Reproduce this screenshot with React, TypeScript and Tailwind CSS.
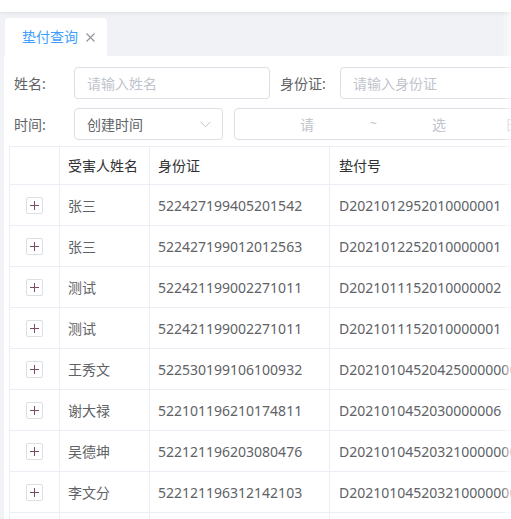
import React from "react";

const rows = [
  ["张三", "522427199405201542", "D2021012952010000001"],
  ["张三", "522427199012012563", "D2021012252010000001"],
  ["测试", "522421199002271011", "D2021011152010000002"],
  ["测试", "522421199002271011", "D2021011152010000001"],
  ["王秀文", "522530199106100932", "D2021010452042500000001"],
  ["谢大禄", "522101196210174811", "D2021010452030000006"],
  ["吴德坤", "522121196203080476", "D2021010452032100000001"],
  ["李文分", "522121196312142103", "D2021010452032100000002"],
  ["", "", ""],
];

export default function App() {
  return (
    <div
      className="relative w-[511px] h-[519px] overflow-hidden bg-[#f0f2f5]"
      style={{ fontFamily: '"Noto Sans", "Noto Sans CJK SC", sans-serif' }}
    >
      <div className="relative z-10 h-[12px] bg-white shadow-[0_1px_4px_rgba(0,21,41,0.08)]" />
      <div className="h-[44px] pt-[6px] pl-[5px]">
        <div className="flex h-[38px] w-[102px] items-center rounded-t-[4px] bg-white pl-[17px] text-[14px] leading-none">
          <span className="text-[#409eff]">垫付查询</span>
          <svg className="ml-[8px]" width="9" height="9" viewBox="0 0 9 9" fill="none">
            <path d="M0.5 0.5 L8.5 8.5 M8.5 0.5 L0.5 8.5" stroke="#909399" strokeWidth="1.1" />
          </svg>
        </div>
      </div>
      <div className="ml-[4px] bg-white pt-[11px] text-[14px] text-[#606266]">
        <div className="flex h-[32px] items-center whitespace-nowrap">
          <div className="w-[70px] shrink-0 pl-[10px]">姓名:</div>
          <div className="flex h-[32px] w-[196px] shrink-0 items-center rounded-[4px] border border-[#dcdfe6] pl-[12px] text-[#c0c4cc]">
            请输入姓名
          </div>
          <div className="w-[70px] shrink-0 pl-[10px]">身份证:</div>
          <div className="flex h-[32px] w-[200px] shrink-0 items-center rounded-[4px] border border-[#dcdfe6] pl-[12px] text-[#c0c4cc]">
            请输入身份证
          </div>
        </div>
        <div className="mt-[9px] flex h-[32px] items-center whitespace-nowrap">
          <div className="w-[70px] shrink-0 pl-[10px]">时间:</div>
          <div className="flex h-[32px] w-[149px] shrink-0 items-center justify-between rounded-[4px] border border-[#dcdfe6] pl-[12px] pr-[11px] text-[#606266]">
            <span>创建时间</span>
            <svg width="11" height="7" viewBox="0 0 11 7" fill="none">
              <path d="M0.5 0.8 L5.5 5.8 L10.5 0.8" stroke="#c0c4cc" strokeWidth="1" />
            </svg>
          </div>
          <div className="ml-[11px] flex h-[32px] w-[300px] shrink-0 items-center rounded-[4px] border border-[#dcdfe6] text-[#c0c4cc]">
            <span className="ml-[65px]">请</span>
            <span className="ml-[56px] text-[12px]">~</span>
            <span className="ml-[55px]">选</span>
            <span className="ml-[59px]">日</span>
          </div>
        </div>
        <div className="ml-[5px] mt-[6px] w-[520px] border-l border-t border-[#ebeef5]">
          <div className="flex h-[38px] items-center border-b border-[#ebeef5] text-[#303133]">
            <div className="h-full w-[50px] shrink-0 border-r border-[#ebeef5]" />
            <div className="flex h-full w-[90px] shrink-0 items-center border-r border-[#ebeef5] pl-[8px]">受害人姓名</div>
            <div className="flex h-full w-[180px] shrink-0 items-center border-r border-[#ebeef5] pl-[8px]">身份证</div>
            <div className="flex h-full flex-1 items-center pl-[9px]">垫付号</div>
          </div>
          {rows.map((r, i) => (
            <div key={i} className="flex h-[41px] items-center border-b border-[#ebeef5] whitespace-nowrap">
              <div className="flex h-full w-[50px] shrink-0 items-center justify-center border-r border-[#ebeef5]">
                {r[0] && (
                  <div className="flex h-[17px] w-[17px] items-center justify-center rounded-[2px] border border-[#dcdfe6]">
                    <svg width="9" height="9" viewBox="0 0 9 9">
                      <path d="M4.5 0 V9 M0 4.5 H9" stroke="#7a4a66" strokeWidth="1" />
                    </svg>
                  </div>
                )}
              </div>
              <div className="flex h-full w-[90px] shrink-0 items-center border-r border-[#ebeef5] pl-[8px]">{r[0]}</div>
              <div className="flex h-full w-[180px] shrink-0 items-center border-r border-[#ebeef5] pl-[8px]">{r[1]}</div>
              <div className="flex h-full flex-1 items-center overflow-hidden pl-[9px]">{r[2]}</div>
            </div>
          ))}
        </div>
      </div>
      <div className="pointer-events-none absolute right-0 top-[12px] bottom-0 w-[9px] bg-gradient-to-r from-white/0 to-white/70" />
    </div>
  );
}
